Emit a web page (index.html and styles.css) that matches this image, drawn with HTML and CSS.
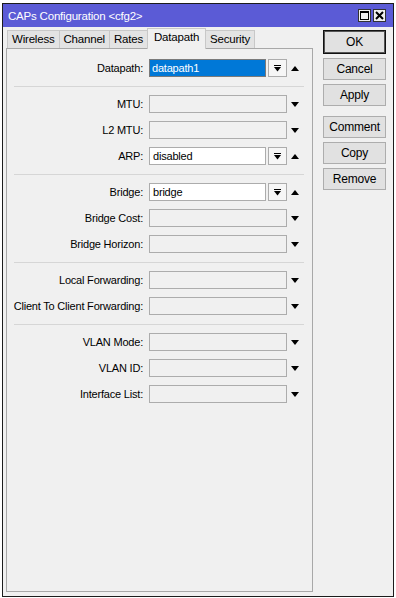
FILE: index.html
```html
<!DOCTYPE html>
<html lang="en">
<head>
<meta charset="UTF-8" />
<title>CAPs Configuration</title>
<link rel="stylesheet" href="styles.css">
</head>
<body>

<div class="window">
  <div class="titlebar">
    <span class="title">CAPs Configuration &lt;cfg2&gt;</span>
    <div class="title-btns">
      <span class="tbtn">
        <svg width="9" height="9" viewBox="0 0 9 9"><rect x="0.5" y="0.5" width="8" height="8" fill="none" stroke="#000"/><rect x="0" y="0" width="9" height="2" fill="#000"/></svg>
      </span>
      <span class="tbtn">
        <svg width="9" height="9" viewBox="0 0 9 9"><path d="M1 1L8 8M8 1L1 8" stroke="#000" stroke-width="2"/></svg>
      </span>
    </div>
  </div>

  <div class="body">
    <div class="main">
      <div class="tabs">
        <span class="tab">Wireless</span>
        <span class="tab">Channel</span>
        <span class="tab">Rates</span>
        <span class="tab active">Datapath</span>
        <span class="tab">Security</span>
      </div>

      <div class="panel">
        <div class="section">
          <div class="row">
            <label>Datapath:</label>
            <div class="combo">
              <div class="field selected">datapath1</div>
              <span class="dropbtn"><svg width="7" height="7" viewBox="0 0 7 7"><rect x="0" y="0" width="7" height="1" fill="#000"/><path d="M0 2H7L3.5 6.5Z" fill="#000"/></svg></span>
            </div>
            <span class="arrow"><svg width="8" height="5" viewBox="0 0 8 5"><path d="M0 5H8L4 0Z" fill="#000"/></svg></span>
          </div>
        </div>
        <div class="sep"></div>

        <div class="section">
          <div class="row">
            <label>MTU:</label>
            <div class="field empty"></div>
            <span class="arrow"><svg width="8" height="5" viewBox="0 0 8 5"><path d="M0 0H8L4 5Z" fill="#000"/></svg></span>
          </div>
          <div class="row">
            <label>L2 MTU:</label>
            <div class="field empty"></div>
            <span class="arrow"><svg width="8" height="5" viewBox="0 0 8 5"><path d="M0 0H8L4 5Z" fill="#000"/></svg></span>
          </div>
          <div class="row">
            <label>ARP:</label>
            <div class="combo">
              <div class="field">disabled</div>
              <span class="dropbtn"><svg width="7" height="7" viewBox="0 0 7 7"><rect x="0" y="0" width="7" height="1" fill="#000"/><path d="M0 2H7L3.5 6.5Z" fill="#000"/></svg></span>
            </div>
            <span class="arrow"><svg width="8" height="5" viewBox="0 0 8 5"><path d="M0 5H8L4 0Z" fill="#000"/></svg></span>
          </div>
        </div>
        <div class="sep"></div>

        <div class="section">
          <div class="row">
            <label>Bridge:</label>
            <div class="combo">
              <div class="field">bridge</div>
              <span class="dropbtn"><svg width="7" height="7" viewBox="0 0 7 7"><rect x="0" y="0" width="7" height="1" fill="#000"/><path d="M0 2H7L3.5 6.5Z" fill="#000"/></svg></span>
            </div>
            <span class="arrow"><svg width="8" height="5" viewBox="0 0 8 5"><path d="M0 5H8L4 0Z" fill="#000"/></svg></span>
          </div>
          <div class="row">
            <label>Bridge Cost:</label>
            <div class="field empty"></div>
            <span class="arrow"><svg width="8" height="5" viewBox="0 0 8 5"><path d="M0 0H8L4 5Z" fill="#000"/></svg></span>
          </div>
          <div class="row">
            <label>Bridge Horizon:</label>
            <div class="field empty"></div>
            <span class="arrow"><svg width="8" height="5" viewBox="0 0 8 5"><path d="M0 0H8L4 5Z" fill="#000"/></svg></span>
          </div>
        </div>
        <div class="sep"></div>

        <div class="section">
          <div class="row">
            <label>Local Forwarding:</label>
            <div class="field empty"></div>
            <span class="arrow"><svg width="8" height="5" viewBox="0 0 8 5"><path d="M0 0H8L4 5Z" fill="#000"/></svg></span>
          </div>
          <div class="row">
            <label>Client To Client Forwarding:</label>
            <div class="field empty"></div>
            <span class="arrow"><svg width="8" height="5" viewBox="0 0 8 5"><path d="M0 0H8L4 5Z" fill="#000"/></svg></span>
          </div>
        </div>
        <div class="sep"></div>

        <div class="section">
          <div class="row">
            <label>VLAN Mode:</label>
            <div class="field empty"></div>
            <span class="arrow"><svg width="8" height="5" viewBox="0 0 8 5"><path d="M0 0H8L4 5Z" fill="#000"/></svg></span>
          </div>
          <div class="row">
            <label>VLAN ID:</label>
            <div class="field empty"></div>
            <span class="arrow"><svg width="8" height="5" viewBox="0 0 8 5"><path d="M0 0H8L4 5Z" fill="#000"/></svg></span>
          </div>
          <div class="row">
            <label>Interface List:</label>
            <div class="field empty"></div>
            <span class="arrow"><svg width="8" height="5" viewBox="0 0 8 5"><path d="M0 0H8L4 5Z" fill="#000"/></svg></span>
          </div>
        </div>
      </div>
    </div>

    <div class="buttons">
      <button class="btn default">OK</button>
      <button class="btn">Cancel</button>
      <button class="btn">Apply</button>
      <button class="btn group">Comment</button>
      <button class="btn">Copy</button>
      <button class="btn">Remove</button>
    </div>
  </div>
</div>

</body>
</html>
```

FILE: styles.css
```css
/* MikroTik style dialog */
body {
  margin: 0;
  background: #fff;
  font-family: "Liberation Sans", Arial, sans-serif;
  font-size: 11px;
  letter-spacing: -0.2px;
  color: #000;
}

.window {
  margin: 3px 0 0 2px;
  width: 390px;
  height: 592px;
  border: 1px solid #1c1c1c;
  background: #f0f0f0;
  display: flex;
  flex-direction: column;
}

.titlebar {
  height: 23px;
  background: #5b5bd6;
  display: flex;
  align-items: center;
  justify-content: space-between;
  padding: 0 7px 0 5px;
}
.title { color: #fff; font-size: 11.5px; }
.title-btns { display: flex; gap: 2px; }
.tbtn {
  width: 11px;
  height: 11px;
  border: 1px solid #333;
  background: #f0f0f0;
  display: flex;
  align-items: center;
  justify-content: center;
}

.body {
  flex: 1;
  display: flex;
  gap: 10px;
  padding: 1px 6px 4px 3px;
}

.main { display: flex; flex-direction: column; width: 307px; }

.tabs {
  display: flex;
  align-items: flex-end;
  height: 20px;
  padding-left: 1px;
}
.tab {
  height: 18px;
  box-sizing: border-box;
  padding: 0 4px;
  line-height: 17px;
  font-size: 11.5px;
  background: #e3e3e3;
  border: 1px solid #c8c8c8;
  border-bottom: none;
  margin-right: -1px;
}
.tab.active {
  height: 21px;
  margin-bottom: -1px;
  padding: 0 6px;
  line-height: 16px;
  background: #f0f0f0;
  border-color: #c8c8c8;
  position: relative;
  z-index: 1;
}

.panel {
  flex: 1;
  border: 1px solid #a8a8a8;
  padding-top: 10px;
}

.section { display: flex; flex-direction: column; gap: 8px; }

.sep {
  height: 1px;
  background: #d6d6d6;
  margin: 9px 8px 8px 7px;
}

.row {
  display: flex;
  align-items: center;
  height: 18px;
}
.row label {
  width: 136px;
  margin-right: 6px;
  text-align: right;
  white-space: nowrap;
}

.field {
  width: 138px;
  height: 18px;
  box-sizing: border-box;
  border: 1px solid #acacac;
  background: #fff;
  padding-left: 3px;
  line-height: 16px;
}
.field.empty { background: #f0f0f0; }
.field.selected {
  background: #0078d7;
  color: #fff;
  border-color: #7a7a7a;
  padding-left: 2px;
}

.combo { display: flex; gap: 2px; width: 138px; }
.combo .field { flex: 1; width: auto; }
.dropbtn {
  width: 19px;
  height: 18px;
  box-sizing: border-box;
  border: 1px solid #acacac;
  background: #f6f6f6;
  display: flex;
  align-items: center;
  justify-content: center;
}

.arrow {
  margin-left: 4px;
  width: 8px;
  display: flex;
  align-items: center;
}

.buttons {
  display: flex;
  flex-direction: column;
  gap: 4px;
  padding-top: 2px;
}
.btn {
  width: 63px;
  height: 22px;
  font-family: inherit;
  font-size: 12px;
  letter-spacing: -0.2px;
  background: #e1e1e1;
  border: 1px solid #adadad;
  color: #000;
  padding: 0;
}
.btn.default {
  height: 24px;
  border: 1px solid #111;
  box-shadow: inset 0 0 0 1px #555;
}
.btn.group { margin-top: 6px; }
```
